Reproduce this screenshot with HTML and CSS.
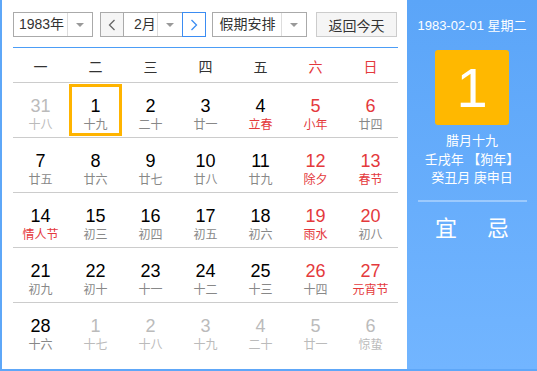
FILE: index.html
```html
<!DOCTYPE html>
<html lang="zh-CN">

<head>
    <meta charset="UTF-8">
    <meta name="viewport" content="width=device-width, initial-scale=1.0">
    <title>万年历</title>
    <link rel="stylesheet" href="styles.css">
</head>

<body>
    <div class="calendar">
        <div class="main">
            <div class="toolbar">
                <div class="select year">
                    <span class="value">1983年</span>
                    <span class="arrow"></span>
                </div>
                <div class="month-group">
                    <span class="nav prev">
                        <svg width="8" height="12" viewBox="0 0 8 12"><polyline points="6.5,1 1.5,6 6.5,11" fill="none" stroke="#666" stroke-width="1.3"/></svg>
                    </span>
                    <div class="select month">
                        <span class="value">2月</span>
                        <span class="arrow"></span>
                    </div>
                    <span class="nav next">
                        <svg width="8" height="12" viewBox="0 0 8 12"><polyline points="1.5,1 6.5,6 1.5,11" fill="none" stroke="#3b8cf2" stroke-width="1.3"/></svg>
                    </span>
                </div>
                <div class="select holiday">
                    <span class="value">假期安排</span>
                    <span class="arrow"></span>
                </div>
                <button class="today">返回今天</button>
            </div>

            <div class="weekdays">
                <span>一</span><span>二</span><span>三</span><span>四</span><span>五</span>
                <span class="red">六</span><span class="red">日</span>
            </div>

            <div class="days">
                <div class="day other"><div class="cell"><b>31</b><i>十八</i></div></div>
                <div class="day selected"><div class="cell"><b>1</b><i>十九</i></div></div>
                <div class="day"><div class="cell"><b>2</b><i>二十</i></div></div>
                <div class="day"><div class="cell"><b>3</b><i>廿一</i></div></div>
                <div class="day fest"><div class="cell"><b>4</b><i>立春</i></div></div>
                <div class="day weekend fest"><div class="cell"><b>5</b><i>小年</i></div></div>
                <div class="day weekend"><div class="cell"><b>6</b><i>廿四</i></div></div>

                <div class="day"><div class="cell"><b>7</b><i>廿五</i></div></div>
                <div class="day"><div class="cell"><b>8</b><i>廿六</i></div></div>
                <div class="day"><div class="cell"><b>9</b><i>廿七</i></div></div>
                <div class="day"><div class="cell"><b>10</b><i>廿八</i></div></div>
                <div class="day"><div class="cell"><b>11</b><i>廿九</i></div></div>
                <div class="day weekend fest"><div class="cell"><b>12</b><i>除夕</i></div></div>
                <div class="day weekend fest"><div class="cell"><b>13</b><i>春节</i></div></div>

                <div class="day fest"><div class="cell"><b>14</b><i>情人节</i></div></div>
                <div class="day"><div class="cell"><b>15</b><i>初三</i></div></div>
                <div class="day"><div class="cell"><b>16</b><i>初四</i></div></div>
                <div class="day"><div class="cell"><b>17</b><i>初五</i></div></div>
                <div class="day"><div class="cell"><b>18</b><i>初六</i></div></div>
                <div class="day weekend fest"><div class="cell"><b>19</b><i>雨水</i></div></div>
                <div class="day weekend"><div class="cell"><b>20</b><i>初八</i></div></div>

                <div class="day"><div class="cell"><b>21</b><i>初九</i></div></div>
                <div class="day"><div class="cell"><b>22</b><i>初十</i></div></div>
                <div class="day"><div class="cell"><b>23</b><i>十一</i></div></div>
                <div class="day"><div class="cell"><b>24</b><i>十二</i></div></div>
                <div class="day"><div class="cell"><b>25</b><i>十三</i></div></div>
                <div class="day weekend"><div class="cell"><b>26</b><i>十四</i></div></div>
                <div class="day weekend fest"><div class="cell"><b>27</b><i>元宵节</i></div></div>

                <div class="day last"><div class="cell"><b>28</b><i>十六</i></div></div>
                <div class="day other last"><div class="cell"><b>1</b><i>十七</i></div></div>
                <div class="day other last"><div class="cell"><b>2</b><i>十八</i></div></div>
                <div class="day other last"><div class="cell"><b>3</b><i>十九</i></div></div>
                <div class="day other last"><div class="cell"><b>4</b><i>二十</i></div></div>
                <div class="day other last"><div class="cell"><b>5</b><i>廿一</i></div></div>
                <div class="day other last"><div class="cell"><b>6</b><i>惊蛰</i></div></div>
            </div>
        </div>

        <div class="side">
            <div class="side-date">1983-02-01 星期二</div>
            <div class="big-day">1</div>
            <div class="lunar">
                <p>腊月十九</p>
                <p>壬戌年 【狗年】</p>
                <p>癸丑月 庚申日</p>
            </div>
            <div class="yiji">
                <span>宜</span>
                <span>忌</span>
            </div>
        </div>
    </div>
</body>

</html>
```

FILE: styles.css
```css
body {
    margin: 0;
    font-family: "Liberation Sans", Arial, "Noto Sans CJK SC", sans-serif;
    background-color: #fff;
}

.calendar {
    width: 537px;
    height: 371px;
    box-sizing: border-box;
    border-left: 2px solid #5ea7f8;
    border-bottom: 2px solid #5ea7f8;
    display: flex;
}

.main {
    width: 385px;
    padding: 0 9px 0 11px;
}

/* top controls */
.toolbar {
    display: flex;
    align-items: center;
    height: 25px;
    margin-top: 12px;
    padding-bottom: 10px;
    border-bottom: 1px solid #4c9df6;
    font-size: 14px;
    color: #333;
}

.select {
    display: flex;
    height: 25px;
    box-sizing: border-box;
    border: 1px solid #aaa;
    background-color: #fff;
}

.select .value {
    flex: 1;
    display: flex;
    align-items: center;
    justify-content: center;
    line-height: 23px;
}

.select .arrow {
    width: 24px;
    border-left: 1px solid #ddd;
    display: flex;
    align-items: center;
    justify-content: center;
}

.select .arrow::after {
    content: '';
    width: 0;
    height: 0;
    border-left: 4px solid transparent;
    border-right: 4px solid transparent;
    border-top: 4px solid #999;
}

.year {
    width: 80px;
}

.year .value {
    padding-left: 2px;
}

.month-group {
    display: flex;
    margin-left: 7px;
}

.nav {
    width: 23px;
    height: 25px;
    box-sizing: border-box;
    display: flex;
    align-items: center;
    justify-content: center;
    background-color: #f5f5f5;
    border: 1px solid #aaa;
}

.nav.prev {
    border-right: none;
}

.nav.next {
    width: 24px;
    background-color: #fff;
    border: 1px solid #3b8cf2;
}

.month {
    width: 59px;
    border-right: none;
}

.month .value {
    justify-content: flex-start;
    padding-left: 10px;
}

.holiday {
    width: 95px;
    margin-left: 6px;
}

.holiday .value {
    padding-left: 1px;
}

.today {
    width: 81px;
    height: 25px;
    margin-left: 9px;
    padding: 0;
    font-family: inherit;
    font-size: 14px;
    color: #333;
    background-color: #f5f5f5;
    border: 1px solid #ccc;
}

/* week header */
.weekdays {
    display: grid;
    grid-template-columns: repeat(7, 55px);
    height: 32px;
    align-items: center;
    border-bottom: 1px solid #ccc;
    font-size: 14px;
    color: #333;
    text-align: center;
    padding-top: 2px;
}

.weekdays .red {
    color: #e4393c;
}

/* day grid */
.days {
    display: grid;
    grid-template-columns: repeat(7, 55px);
    grid-auto-rows: 55px;
}

.day {
    box-sizing: border-box;
    border-bottom: 1px solid #ccc;
    padding: 1px;
}

.day.last {
    border-bottom: none;
}

.day .cell {
    height: 100%;
    box-sizing: border-box;
    border: 3px solid transparent;
    display: flex;
    flex-direction: column;
    align-items: center;
    padding-top: 9px;
}

.day.selected .cell {
    border-color: #ffb400;
}

.day b {
    font-weight: normal;
    font-size: 18px;
    line-height: 20px;
    color: #000;
}

.day i {
    font-style: normal;
    font-size: 12px;
    line-height: 16px;
    margin-top: 1px;
    color: #888;
}

.day.weekend b,
.day.fest i {
    color: #e4393c;
}

.day.other b,
.day.other i {
    color: #bbb;
}

/* right panel */
.side {
    flex: 1;
    background: linear-gradient(#5ba5f8, #72b5ff);
    color: #fff;
    display: flex;
    flex-direction: column;
    align-items: center;
}

.side-date {
    margin-top: 17px;
    font-size: 13px;
    line-height: 18px;
}

.big-day {
    width: 74px;
    height: 75px;
    margin-top: 15px;
    background-color: #ffb800;
    border-radius: 3px;
    font-size: 56px;
    line-height: 75px;
    text-align: center;
}

.lunar {
    margin-top: 7px;
    width: 109px;
    padding-bottom: 12px;
    border-bottom: 2px solid rgba(255, 255, 255, 0.35);
    text-align: center;
    font-size: 13px;
}

.lunar p {
    margin: 0;
    line-height: 18.5px;
}

.yiji {
    display: flex;
    gap: 30px;
    margin-top: 14px;
    font-size: 22px;
    line-height: 26px;
}
```
